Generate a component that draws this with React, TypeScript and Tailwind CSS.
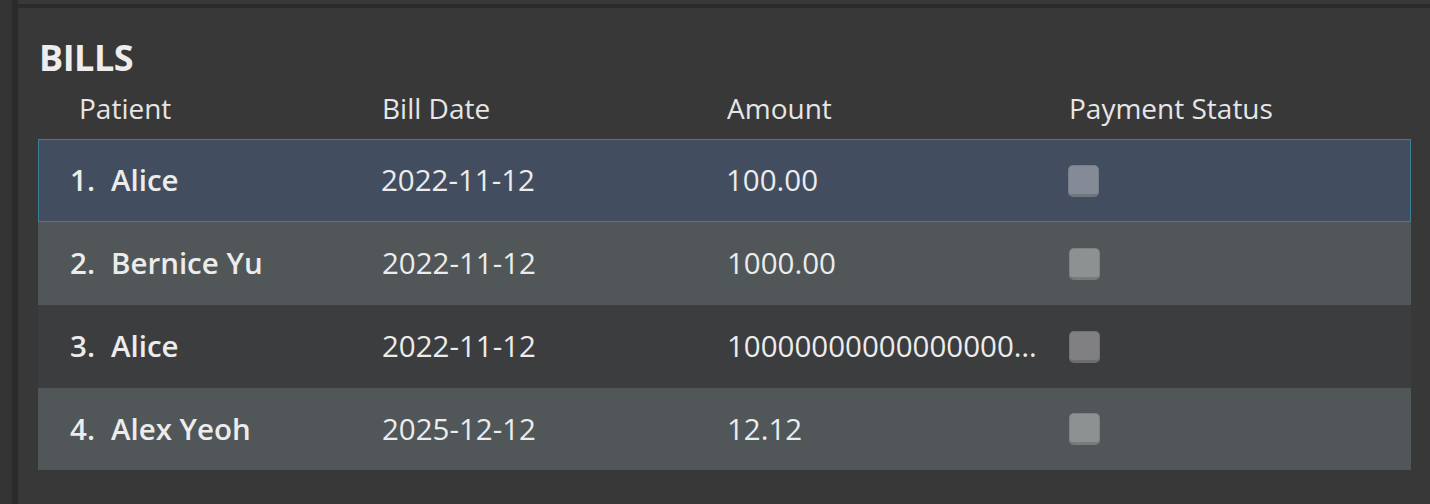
import React from "react";

type Bill = { n: number; name: string; date: string; amount: string };

const bills: Bill[] = [
  { n: 1, name: "Alice", date: "2022-11-12", amount: "100.00" },
  { n: 2, name: "Bernice Yu", date: "2022-11-12", amount: "1000.00" },
  { n: 3, name: "Alice", date: "2022-11-12", amount: "10000000000000000000000000.00" },
  { n: 4, name: "Alex Yeoh", date: "2025-12-12", amount: "12.12" },
];

const rowStyles = [
  "h-[83px] bg-[#424e5f] border border-[#3a8196] pl-[31px] grid-cols-[312px_345px_342px_1fr]",
  "h-[83px] bg-[#515658] pl-[32px] grid-cols-[312px_345px_342px_1fr]",
  "h-[83px] bg-[#3c3d3f] pl-[32px] grid-cols-[312px_345px_342px_1fr]",
  "h-[82px] bg-[#515658] pl-[32px] grid-cols-[312px_345px_342px_1fr]",
];

function Checkbox() {
  return (
    <div className="w-[31px] h-[32px] rounded-[5px] bg-white/35 border border-black/10 border-b-[3px] border-b-black/15" />
  );
}

export default function App() {
  return (
    <div
      className="w-[1430px] h-[504px] bg-[#333333] flex overflow-hidden text-[#ececec]"
      style={{ fontFamily: '"Open Sans", "Noto Sans", sans-serif' }}
    >
      <div className="w-[12px] shrink-0" />
      <div className="flex-1 flex flex-col border-l-[6px] border-[#2a2a2a] bg-[#383838]">
        <div className="h-[4px] shrink-0" />
        <div className="h-[4px] shrink-0 bg-[#2b2b2b]" />
        <div className="pl-[20px] pr-[1px]">
          <div className="mt-[28px] h-[44px] flex items-center pl-[1px] text-[36px] font-bold tracking-[-0.5px] text-[#ededed]">
            BILLS
          </div>
          <div className="h-[56px] grid grid-cols-[344px_345px_342px_1fr] items-center text-[28px] text-[#e6e6e6]">
            <div className="pl-[41px]">Patient</div>
            <div>Bill Date</div>
            <div>Amount</div>
            <div>Payment Status</div>
          </div>
          <div className="mt-[3px] w-[1373px] flex flex-col">
            {bills.map((b, i) => (
              <div
                key={b.n}
                className={`grid items-center text-[29.5px] ${rowStyles[i]}`}
              >
                <div className="flex items-center gap-[16px] font-semibold">
                  <span>{b.n}.</span>
                  <span>{b.name}</span>
                </div>
                <div className={i === 0 ? "-ml-[1px]" : ""}>{b.date}</div>
                <div className={`truncate pr-[16px] ${i === 0 ? "-ml-[1px]" : ""}`}>{b.amount}</div>
                <div className={i === 0 ? "-ml-[1px]" : ""}>
                  <Checkbox />
                </div>
              </div>
            ))}
          </div>
        </div>
      </div>
    </div>
  );
}
